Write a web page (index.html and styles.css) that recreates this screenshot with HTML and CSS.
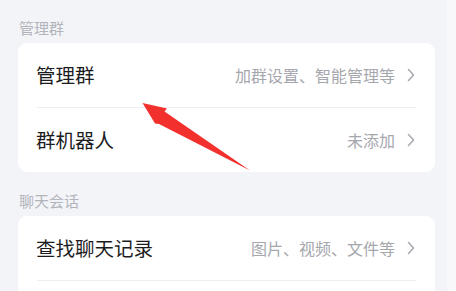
FILE: index.html
```html
<!DOCTYPE html>
<html lang="zh-CN">
<head>
<meta charset="utf-8">
<title>群设置</title>
<link rel="stylesheet" href="styles.css">
</head>
<body>
<div class="screen">
  <main class="content">
    <section class="group">
      <div class="group-title">管理群</div>
      <div class="card">
        <div class="row">
          <span class="row-title">管理群</span>
          <span class="row-value">加群设置、智能管理等<svg class="chevron" viewBox="0 0 8 14" width="8" height="14"><polyline points="1.5,1.5 6.5,7 1.5,12.5" /></svg></span>
        </div>
        <div class="row">
          <span class="row-title">群机器人</span>
          <span class="row-value">未添加<svg class="chevron" viewBox="0 0 8 14" width="8" height="14"><polyline points="1.5,1.5 6.5,7 1.5,12.5" /></svg></span>
        </div>
      </div>
    </section>
    <section class="group">
      <div class="group-title">聊天会话</div>
      <div class="card">
        <div class="row">
          <span class="row-title">查找聊天记录</span>
          <span class="row-value">图片、视频、文件等<svg class="chevron" viewBox="0 0 8 14" width="8" height="14"><polyline points="1.5,1.5 6.5,7 1.5,12.5" /></svg></span>
        </div>
        <div class="row"></div>
      </div>
    </section>
  </main>
  <div class="scroll-track"></div>
  <svg class="annotation-arrow" viewBox="0 0 456 291" width="456" height="291">
    <polygon points="142.5,103 167,108.5 164.5,111.5 250,170.5 159,124 155,123.5" />
  </svg>
</div>
</body>
</html>
```

FILE: styles.css
```css
html, body {
  margin: 0;
  padding: 0;
}

body {
  background: #f3f4f8;
  font-family: "Noto Sans CJK SC", "Noto Sans", sans-serif;
}

.screen {
  position: relative;
  width: 456px;
  height: 291px;
  overflow: hidden;
  display: flex;
}

.content {
  width: 447px;
  box-sizing: border-box;
  padding: 18px 12px 0 18px;
  display: flex;
  flex-direction: column;
  gap: 19px;
}

.group-title {
  font-size: 15px;
  line-height: 20px;
  color: #b2b4bb;
  padding: 0 0 5px 1px;
}

.card {
  background: #ffffff;
  border-radius: 9px;
  overflow: hidden;
}

.row {
  height: 64px;
  display: flex;
  align-items: center;
  justify-content: space-between;
  padding: 0 20px 0 18px;
  position: relative;
}

.row + .row {
  border-top: 1px solid transparent;
}

.row + .row::before {
  content: "";
  position: absolute;
  top: -1px;
  left: 19px;
  right: 19px;
  height: 1px;
  background: #eeeff2;
}

.row-title {
  font-size: 19.5px;
  line-height: 26px;
  color: #1c1c1e;
}

.row-value {
  display: flex;
  align-items: center;
  font-size: 16px;
  line-height: 22px;
  color: #a5a7ad;
}

.chevron {
  margin-left: 12px;
  fill: none;
  stroke: #a9abb1;
  stroke-width: 1.6;
  stroke-linecap: round;
  stroke-linejoin: round;
}

.scroll-track {
  width: 9px;
  background: #f8f8fa;
}

.annotation-arrow {
  position: absolute;
  left: 0;
  top: 0;
  pointer-events: none;
}

.annotation-arrow polygon {
  fill: #f2312e;
}
```
